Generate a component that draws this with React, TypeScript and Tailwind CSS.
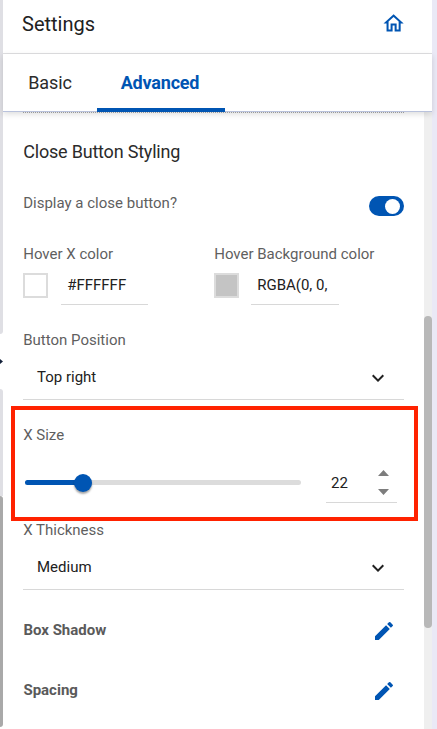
import type { ReactNode } from 'react';

function Icon({ d, className = '', viewBox = '0 0 24 24' }: { d: string; className?: string; viewBox?: string }) {
  return (
    <svg viewBox={viewBox} width="24" height="24" fill="currentColor" className={`block shrink-0 ${className}`}>
      <path d={d} />
    </svg>
  );
}

const HOME = 'M12 5.69l5 4.5V18h-2v-6H9v6H7v-7.81l5-4.5M12 3L2 12h3v8h6v-6h2v6h6v-8h3L12 3z';
const CHEVRON = 'M16.59 8.59L12 13.17 7.41 8.59 6 10l6 6 6-6z';
const EDIT =
  'M3 17.25V21h3.75L17.81 9.94l-3.75-3.75L3 17.25zM20.71 7.04a.996.996 0 0 0 0-1.41l-2.34-2.34a.996.996 0 0 0-1.41 0l-1.83 1.83 3.75 3.75 1.83-1.83z';

function Label({ children }: { children: ReactNode }) {
  return <div className="h-5 pl-[0.2px] text-[15px] leading-5 text-[#5f5f5f]">{children}</div>;
}

function ColorField({ label, value, swatch, width }: { label: string; value: string; swatch: string; width: string }) {
  return (
    <div className="whitespace-nowrap">
      <Label>{label}</Label>
      <div className="mt-[3px] flex h-[38px]">
        <div className={`mt-[6px] size-[25px] border-2 border-[#dcdcdc] ${swatch}`} />
        <div className={`h-[38px] border-b border-[#d8d8d8] pl-[6.2px] text-[15px] leading-[36px] text-[#212121] ${width}`}>
          {value}
        </div>
      </div>
    </div>
  );
}

function SelectField({ label, value }: { label: string; value: string }) {
  return (
    <div>
      <Label>{label}</Label>
      <div className="flex h-[50px] items-center justify-between border-b border-[#d8d8d8] pt-[5px] pr-[14px] pl-[14px] text-[15px] text-[#212121]">
        <span>{value}</span>
        <Icon d={CHEVRON} className="relative top-px" />
      </div>
    </div>
  );
}

function EditRow({ label }: { label: string }) {
  return (
    <div className="flex h-[60px] items-center justify-between pr-2 pl-[0.4px] text-[15px] font-bold text-[#5a5a5a]">
      <span>{label}</span>
      <Icon d={EDIT} className="relative top-px text-[#0055b3]" />
    </div>
  );
}

export default function App() {
  return (
    <div className="relative flex h-[729px] w-[437px] overflow-hidden bg-white font-[Roboto,sans-serif]">
      <div className="flex w-[3px] shrink-0 flex-col bg-white">
        <div className="h-[334px] rounded-br-[3px] bg-[#dfdfe4]" />
        <div className="flex h-[55px] items-center">
          <svg width="3" height="5" viewBox="0 0 3 5" className="block">
            <path d="M0 0L3 2.5 0 5z" fill="#14213a" />
          </svg>
        </div>
        <div className="h-[107px] rounded-tr-[3px] bg-[#dfdfe4]" />
        <div className="h-[231px] rounded-r-[3px] bg-[#a9a9a9]" />
      </div>

      <div className="flex w-[429px] shrink-0 flex-col">
        <header className="flex h-[54px] shrink-0 items-start justify-between border-b border-[#e0e0e2] pr-[27px] pl-[19px]">
          <h1 className="mt-[9px] text-[20px] leading-[30px] text-[#212121]">Settings</h1>
          <Icon d={HOME} viewBox="-0.5 -0.3 23.8 23.8" className="mt-[11px] text-[#0055b3]" />
        </header>
        <nav className="z-10 flex h-[58px] shrink-0 border-b border-[#b9c2dc] text-[18px] leading-[58px] shadow-[0_2px_6px_rgba(0,0,0,0.14)]">
          <div className="w-[94px] text-center tracking-[-0.1px] text-[#2b2b2b]">Basic</div>
          <div className="h-[58px] w-[128px] border-b-4 border-[#0055b3] pr-[2px] text-center font-bold tracking-[-0.2px] text-[#0055b3]">
            Advanced
          </div>
        </nav>

        <div className="flex min-h-0 grow">
          <main className="w-[421px] pr-5 pl-5">
            <div className="border-t border-dotted border-[#a9a9a9]" />
            <h2 className="mt-[24px] h-[30px] pl-[0.2px] text-[18px] leading-[30px] tracking-[-0.2px] text-[#2b2b2b]">
              Close Button Styling
            </h2>
            <div className="mt-[26px] flex h-[51px] justify-between">
              <Label>Display a close button?</Label>
              <div className="mt-[3px] flex h-5 w-[35px] items-center justify-end rounded-full bg-[#0055b3] pr-1">
                <div className="size-[15px] rounded-full bg-white" />
              </div>
            </div>
            <div className="flex h-[86px]">
              <div className="w-[191px]">
                <ColorField label="Hover X color" value="#FFFFFF" swatch="bg-white" width="ml-[13px] w-[87px]" />
              </div>
              <ColorField label="Hover Background color" value="RGBA(0, 0," swatch="bg-[#c4c4c4]" width="ml-[12px] w-[88px]" />
            </div>
            <SelectField label="Button Position" value="Top right" />
            <div className="mt-[25px] h-[95px]">
              <Label>X Size</Label>
              <div className="mt-[18px] flex h-10">
                <div className="mt-[17px] ml-[2px] flex h-[5px] w-[276px] items-center rounded-full bg-[#dcdcdc]">
                  <div className="h-[5px] w-[50px] rounded-l-full bg-[#0055b3]" />
                  <div className="-ml-px size-[18px] shrink-0 rounded-full bg-[#0055b3] shadow-[0_2px_2px_rgba(0,0,0,0.35)]" />
                </div>
                <div className="ml-[25px] flex w-[71px] justify-between border-b border-[#d8d8d8] pr-2 pl-[5px] text-[15px] text-[#212121]">
                  <span className="leading-[41px]">22</span>
                  <svg width="11" height="25" viewBox="0 0 11 25" fill="#7d7d7d" className="mt-[7px] block">
                    <path d="M0 6L5.5 0 11 6zM0 19L5.5 25 11 19z" />
                  </svg>
                </div>
              </div>
            </div>
            <SelectField label="X Thickness" value="Medium" />
            <div className="pt-[10px]">
              <EditRow label="Box Shadow" />
              <EditRow label="Spacing" />
            </div>
          </main>
          <div className="w-2 bg-[#efefef] pt-[204px]">
            <div className="h-[312px] rounded-full bg-[#b8b8b8]" />
          </div>
        </div>
      </div>
      <div className="w-[5px] shrink-0 bg-[#eae9f6]" />

      <div className="pointer-events-none absolute top-[406px] left-[11px] h-[115px] w-[407px] border-4 border-[#ff2200]" />
    </div>
  );
}
